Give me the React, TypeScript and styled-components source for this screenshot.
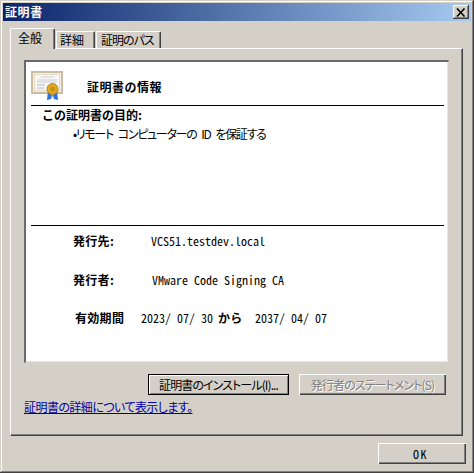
import React from "react";
import styled, { createGlobalStyle } from "styled-components";

const Global = createGlobalStyle`
  html, body { margin: 0; padding: 0; background: #d4d0c8; }
  body { font-family: "Noto Sans CJK JP", "Liberation Sans", sans-serif; font-size: 12px; color: #000; }
`;

const Window = styled.div`
  box-sizing: border-box;
  width: 474px;
  height: 473px;
  padding: 3px;
  background: #d4d0c8;
  display: flex;
  flex-direction: column;
  box-shadow: inset -1px -1px 0 #404040, inset 1px 1px 0 #d4d0c8, inset -2px -2px 0 #808080, inset 2px 2px 0 #fff;
  overflow: hidden;
`;

const TitleBar = styled.div`
  height: 18px;
  flex: none;
  display: flex;
  align-items: center;
  justify-content: space-between;
  padding: 0 2px 0 2px;
  background: linear-gradient(90deg, #0a246a, #a6caf0);
`;

const TitleText = styled.span`
  color: #fff;
  font-weight: 700;
  font-size: 12px;
  letter-spacing: 0.6px;
  line-height: 18px;
`;

const CloseButton = styled.div`
  width: 16px;
  height: 14px;
  display: flex;
  align-items: center;
  justify-content: center;
  background: #d4d0c8;
  box-shadow: inset -1px -1px 0 #404040, inset 1px 1px 0 #fff, inset -2px -2px 0 #808080;
`;

const Tabs = styled.div`
  display: flex;
  align-items: flex-end;
  height: 20px;
  margin: 7px 0 0 7px;
  flex: none;
  position: relative;
  z-index: 1;
`;

const Tab = styled.div<{ $active?: boolean; $w: number; $pad: number; $tight?: boolean }>`
  box-sizing: border-box;
  width: ${(p) => p.$w}px;
  height: ${(p) => (p.$active ? 21 : 17)}px;
  margin-bottom: ${(p) => (p.$active ? -1 : 0)}px;
  margin-right: 1px;
  padding-left: ${(p) => p.$pad}px;
  background: #d4d0c8;
  border-top: 1px solid #fff;
  border-left: 1px solid #fff;
  border-right: 1px solid #404040;
  border-radius: 2px 2px 0 0;
  box-shadow: inset -1px 0 0 #808080;
  font-size: 12px;
  font-feature-settings: "palt";
  letter-spacing: ${(p) => (p.$tight ? "-1px" : "0")};
  line-height: ${(p) => (p.$active ? 18 : 16)}px;
  white-space: nowrap;
`;

const Panel = styled.div`
  box-sizing: border-box;
  width: 453px;
  height: 388px;
  margin-left: 7px;
  flex: none;
  padding: 11px 13px 0 13px;
  border-top: 1px solid #fff;
  border-left: 1px solid #fff;
  border-right: 1px solid #404040;
  border-bottom: 1px solid #404040;
  box-shadow: inset -1px -1px 0 #808080;
  display: flex;
  flex-direction: column;
`;

const Sheet = styled.div`
  box-sizing: border-box;
  height: 303px;
  flex: none;
  background: #fff;
  padding: 0 4px 0 5px;
  border-top: 2px solid #6a6a6a;
  border-left: 2px solid #6a6a6a;
  border-right: 1px solid #d4d0c8;
  border-bottom: 1px solid #d4d0c8;
  box-shadow: inset -1px -1px 0 #e8e6e0;
  display: flex;
  flex-direction: column;
`;

const HeaderRow = styled.div`
  box-sizing: border-box;
  height: 44px;
  flex: none;
  display: flex;
  align-items: flex-start;
  border-bottom: 1px solid #000;
`;

const CertIcon = styled.svg`
  width: 33px;
  height: 30px;
  margin-top: 9px;
  flex: none;
`;

const HeaderTitle = styled.div`
  margin: 16px 0 0 23px;
  font-weight: 700;
  font-size: 12px;
  letter-spacing: 0.5px;
  line-height: 18px;
`;

const Purpose = styled.div`
  box-sizing: border-box;
  height: 120px;
  flex: none;
  border-bottom: 1px solid #000;
  padding: 0 0 0 11px;
`;

const PurposeTitle = styled.div`
  font-weight: 700;
  line-height: 18px;
`;

const Bullet = styled.div`
  margin: 0 0 0 31px;
  padding-top: 1px;
  line-height: 18px;
  white-space: nowrap;
  font-feature-settings: "palt";
  letter-spacing: -1.3px;
  word-spacing: 3.5px;
`;

const Details = styled.div`
  display: flex;
  flex-direction: column;
`;

const DetailRow = styled.div<{ $h: number; $pad: number; $labelW: number }>`
  height: ${(p) => p.$h}px;
  padding-left: ${(p) => p.$pad}px;
  display: grid;
  grid-template-columns: ${(p) => p.$labelW}px auto;
  align-items: center;
  justify-content: start;
  white-space: nowrap;
`;

const Label = styled.span`
  font-weight: 700;
  letter-spacing: 0.3px;
`;

const Value = styled.span`
  font-size: 12px;
  font-feature-settings: "hwid";
`;

const DateLine = styled.span`
  font-size: 12px;
  font-feature-settings: "hwid";
  display: grid;
  grid-template-columns: 77px 37px auto;
`;

const Actions = styled.div`
  display: flex;
  justify-content: flex-end;
  gap: 10px;
  padding-right: 3px;
  margin-top: 11px;
`;

const InstallButton = styled.button`
  box-sizing: border-box;
  width: 141px;
  height: 21px;
  padding: 0;
  font: inherit;
  font-size: 12px;
  font-feature-settings: "palt";
  letter-spacing: -0.9px;
  white-space: nowrap;
  color: #000;
  background: #d4d0c8;
  border: 1px solid #000;
  box-shadow: inset 1px 1px 0 #fff, inset -1px -1px 0 #808080;
`;

const DisabledButton = styled.button`
  box-sizing: border-box;
  width: 147px;
  height: 21px;
  padding: 0;
  font: inherit;
  font-size: 12px;
  font-feature-settings: "palt";
  letter-spacing: -0.9px;
  white-space: nowrap;
  color: #808080;
  text-shadow: 1px 1px 0 #fff;
  background: #d4d0c8;
  border: none;
  box-shadow: inset 1px 1px 0 #fff, inset -1px -1px 0 #404040, inset -2px -2px 0 #808080;
`;

const DetailsLink = styled.a`
  margin-top: 3px;
  color: #0000a0;
  text-decoration: underline;
  font-size: 12px;
  font-feature-settings: "palt";
  letter-spacing: -0.55px;
  line-height: 18px;
  align-self: flex-start;
  white-space: nowrap;
`;

const Footer = styled.div`
  display: flex;
  justify-content: flex-end;
  padding: 7px 5px 0 0;
`;

const OkButton = styled.button`
  box-sizing: border-box;
  width: 88px;
  height: 21px;
  padding: 0 3px 0 0;
  font: inherit;
  font-size: 12px;
  font-feature-settings: "hwid";
  letter-spacing: 1.5px;
  color: #000;
  background: #d4d0c8;
  border: none;
  box-shadow: inset 1px 1px 0 #fff, inset -1px -1px 0 #404040, inset -2px -2px 0 #808080;
`;

const Certificate = () => (
  <CertIcon viewBox="0 0 33 30">
    <rect x="1" y="1" width="30" height="21" fill="#f3efe4" stroke="#cbbca4" strokeWidth="2" />
    <rect x="3.5" y="3.5" width="25" height="16" fill="#f7f7f6" stroke="#e4dccb" />
    <path d="M10 6h13M6 9h20M6 11h20" stroke="#ccd0d8" strokeWidth="1" />
    <path d="M6 14h8M6 17h7" stroke="#b4b8c0" strokeWidth="1" />
    <path d="M16 29l1-9 4 4-1 4zM27 29l-1-9-4 4 1 4z" fill="#2f6fd8" />
    <path d="M20 28l1.5-6 1.5 6-1.5-2z" fill="#8cb4f0" />
    <circle cx="21.5" cy="18" r="5.5" fill="#e3a821" stroke="#b08820" />
    <circle cx="21.5" cy="18" r="2.5" fill="#cc8f14" />
  </CertIcon>
);

export default function App() {
  return (
    <Window>
      <Global />
      <TitleBar>
        <TitleText>証明書</TitleText>
        <CloseButton>
          <svg width="10" height="9" viewBox="0 0 10 9">
            <path d="M1 0.5l7.5 8M8.5 0.5l-7.5 8" stroke="#000" strokeWidth="1.6" />
          </svg>
        </CloseButton>
      </TitleBar>
      <Tabs>
        <Tab $active $w={45} $pad={7}>全般</Tab>
        <Tab $w={39} $pad={3}>詳細</Tab>
        <Tab $w={65} $pad={4} $tight>証明のパス</Tab>
      </Tabs>
      <Panel>
        <Sheet>
          <HeaderRow>
            <Certificate />
            <HeaderTitle>証明書の情報</HeaderTitle>
          </HeaderRow>
          <Purpose>
            <PurposeTitle>この証明書の目的:</PurposeTitle>
            <Bullet>•リモート コンピューターの ID を保証する</Bullet>
          </Purpose>
          <Details>
            <DetailRow $h={29} $pad={42} $labelW={78}>
              <Label>発行先:</Label>
              <Value>VCS51.testdev.local</Value>
            </DetailRow>
            <DetailRow $h={49} $pad={42} $labelW={79}>
              <Label>発行者:</Label>
              <Value>VMware Code Signing CA</Value>
            </DetailRow>
            <DetailRow $h={26} $pad={44} $labelW={66}>
              <Label>有効期間</Label>
              <DateLine>
                <span>2023/ 07/ 30</span>
                <Label>から</Label>
                <span>2037/ 04/ 07</span>
              </DateLine>
            </DetailRow>
          </Details>
        </Sheet>
        <Actions>
          <InstallButton>証明書のインストール(I)...</InstallButton>
          <DisabledButton disabled>発行者のステートメント(S)</DisabledButton>
        </Actions>
        <DetailsLink>証明書の詳細について表示します。</DetailsLink>
      </Panel>
      <Footer>
        <OkButton>OK</OkButton>
      </Footer>
    </Window>
  );
}
